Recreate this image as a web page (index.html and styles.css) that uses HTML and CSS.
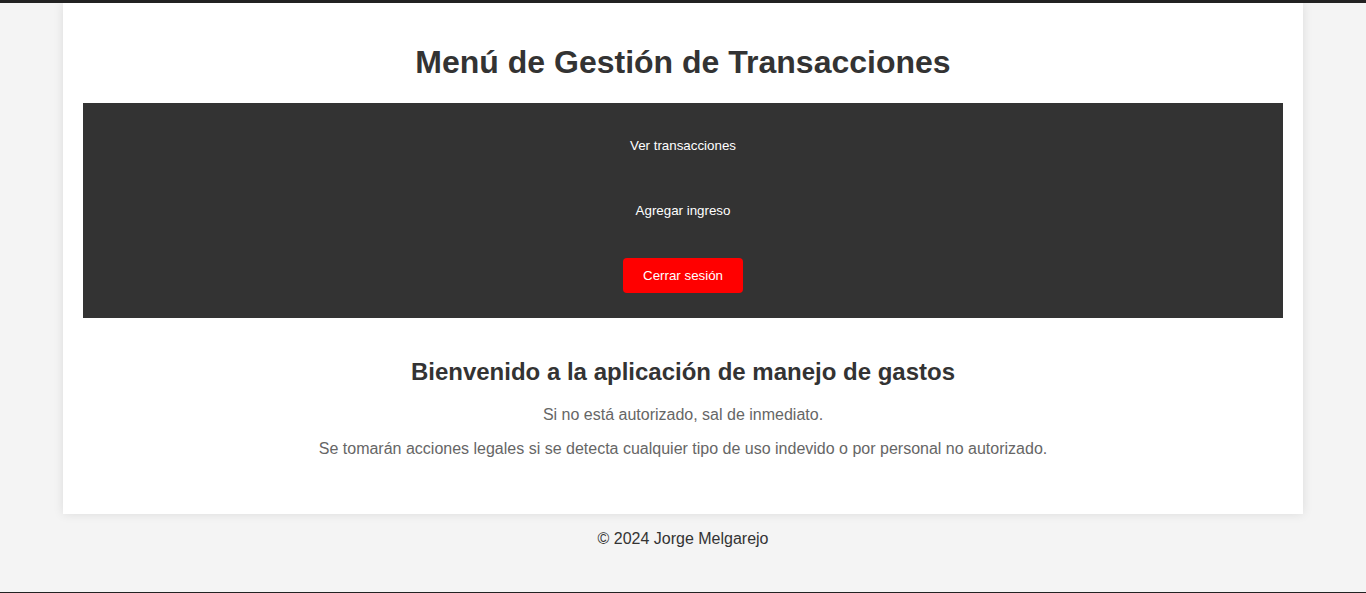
FILE: index.html
```html
<!DOCTYPE html>
<html lang="es">
<head>
<meta charset="utf-8">
<title>Menú de Gestión de Transacciones</title>
<link rel="stylesheet" href="styles.css">
</head>
<body>
<div class="page">
  <div class="container">
    <h1 class="title">Menú de Gestión de Transacciones</h1>
    <nav class="menu">
      <a class="menu-link" href="#">Ver transacciones</a>
      <a class="menu-link" href="#">Agregar ingreso</a>
      <a class="menu-link logout" href="#">Cerrar sesión</a>
    </nav>
    <section class="welcome">
      <h2 class="welcome-title">Bienvenido a la aplicación de manejo de gastos</h2>
      <p class="welcome-text">Si no está autorizado, sal de inmediato.</p>
      <p class="welcome-text">Se tomarán acciones legales si se detecta cualquier tipo de uso indevido o por personal no autorizado.</p>
    </section>
  </div>
  <footer class="footer">© 2024 Jorge Melgarejo</footer>
</div>
</body>
</html>
```
FILE: styles.css
```css
html, body {
  margin: 0;
  padding: 0;
}
body {
  background: #f4f4f4;
  font-family: "Liberation Sans", Arial, sans-serif;
  color: #333;
  border-top: 3px solid #222;
}
.page {
  min-height: calc(100vh - 3px);
  border-bottom: 1px solid #222;
  box-sizing: border-box;
  display: flex;
  flex-direction: column;
}
.container {
  width: 1200px;
  margin: 0 auto;
  padding: 20px;
  background: #fff;
  box-shadow: 0 0 10px rgba(0, 0, 0, 0.1);
}
.title {
  font-size: 32px;
  text-align: center;
  margin: 21px 0 22px;
  color: #333;
}
.menu {
  background: #333;
  padding: 25px 0;
  display: flex;
  flex-direction: column;
  align-items: center;
  gap: 30px;
}
.menu-link {
  color: #fff;
  text-decoration: none;
  font-size: 13.333px;
  line-height: 15px;
  padding: 10px 20px;
  border-radius: 4px;
}
.logout {
  background: #ff0000;
}
.welcome {
  padding: 20px;
  text-align: center;
}
.welcome-title {
  font-size: 24px;
  margin: 20px 0;
  color: #333;
}
.welcome-text {
  font-size: 16px;
  color: #666;
  margin: 16px 0;
}
.footer {
  text-align: center;
  font-size: 16px;
  padding: 16px 0 14px;
  color: #333;
}
```
